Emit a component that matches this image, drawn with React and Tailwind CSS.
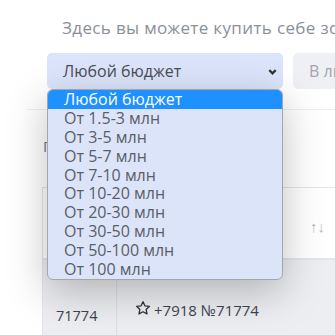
import React from "react";

const items = [
  "Любой бюджет",
  "От 1.5-3 млн",
  "От 3-5 млн",
  "От 5-7 млн",
  "От 7-10 млн",
  "От 10-20 млн",
  "От 20-30 млн",
  "От 30-50 млн",
  "От 50-100 млн",
  "От 100 млн",
];

export default function App() {
  return (
    <div className="relative w-[335px] h-[335px] overflow-hidden bg-white font-['Open_Sans',sans-serif]">
      <p className="pl-[62px] pt-[17px] text-[17px] tracking-[0.35px] leading-[21px] text-[#8a9099] whitespace-nowrap">
        Здесь вы можете купить себе золотой номер
      </p>
      <div className="flex gap-[10px] pl-[47px] mt-[15px]">
        <div className="w-[236px] shrink-0 h-[36px] rounded-[5px] bg-[#dbe4fa] flex items-center justify-between pl-[16px] pr-[5px] text-[16px] text-[#4a4d55]">
          <span>Любой бюджет</span>
          <svg width="11" height="11" viewBox="0 0 12 12" fill="none" stroke="#333" strokeWidth="2.4">
            <path d="M2.5 4.5 L6 8 L9.5 4.5" />
          </svg>
        </div>
        <div className="w-[150px] shrink-0 h-[36px] rounded-[5px] bg-[#eef0f4] pl-[16px] flex items-center text-[16px] text-[#a0a5ad] whitespace-nowrap">
          В любом регионе
        </div>
      </div>
      <div className="ml-[27px] mt-[20px] h-px bg-[#eceef0]" />
      <p className="pl-[43px] mt-[27px] text-[15px] leading-[18px] text-[#6f7680] whitespace-nowrap">
        Показать по
      </p>
      <div className="ml-[42px] mt-[32px] border-l border-t border-[#e3e5e8]">
        <div className="h-[72px] flex items-center justify-end pr-[10px] pt-[6px] border-b-2 border-[#e3e5e8] text-[#b5b9bf] text-[15px]">
          ↑↓
        </div>
        <div className="flex h-[80px] bg-[#eceef1]">
          <div className="w-[74px] border-r border-[#dcdee2] pl-[13px] pt-[45px] text-[14.5px] text-[#3d4450]">71774</div>
          <div className="pl-[18px] pt-[39px] flex items-start gap-[3px] text-[15px] text-[#3d4450]">
            <svg width="16" height="16" viewBox="0 0 24 24" fill="none" stroke="#333" strokeWidth="2" strokeLinejoin="round" className="mt-[1px]">
              <path d="M12 2.5l2.9 6.2 6.8.8-5 4.7 1.3 6.7L12 17.6l-6 3.3 1.3-6.7-5-4.7 6.8-.8z" />
            </svg>
            <span>+7918 №71774</span>
          </div>
        </div>
      </div>
      <div className="absolute left-[47px] top-[89px] w-[236px] h-[191px] rounded-[6px] border border-[#a3a6ab] bg-[#dce4fa] overflow-hidden shadow-[0_12px_40px_rgba(0,0,0,0.25)]">
        {items.map((t, i) => (
          <div
            key={t}
            className={
              "h-[18.9px] leading-[18.9px] pl-[16px] text-[16px] whitespace-nowrap " +
              (i === 0 ? "bg-[#1e90ff] text-white" : "text-[#5a5e66]")
            }
          >
            {t}
          </div>
        ))}
      </div>
    </div>
  );
}
